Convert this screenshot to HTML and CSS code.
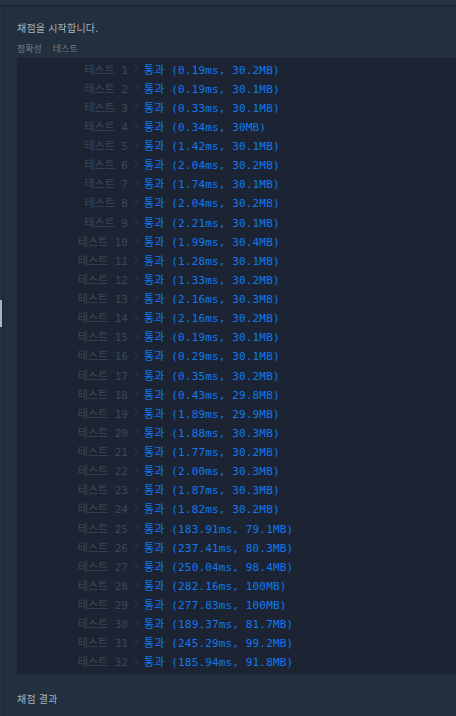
FILE: index.html
```html
<!DOCTYPE html>
<html lang="ko">
<head>
<meta charset="utf-8">
<link rel="stylesheet" href="styles.css">
</head>
<body>
<div class="topbar"></div>
<div class="page">
  <div class="rail"><div class="thumb"></div></div>
  <div class="main">
    <div class="title">채점을 시작합니다.</div>
    <div class="tabs"><span>정확성</span><span>테스트</span></div>
    <div class="console" id="console"></div>
    <div class="result-title">채점 결과</div>
  </div>
</div>
<script>
var data=[["0.19ms","30.2MB"],["0.19ms","30.1MB"],["0.33ms","30.1MB"],["0.34ms","30MB"],["1.42ms","30.1MB"],["2.04ms","30.2MB"],["1.74ms","30.1MB"],["2.04ms","30.2MB"],["2.21ms","30.1MB"],["1.99ms","30.4MB"],["1.28ms","30.1MB"],["1.33ms","30.2MB"],["2.16ms","30.3MB"],["2.16ms","30.2MB"],["0.19ms","30.1MB"],["0.29ms","30.1MB"],["0.35ms","30.2MB"],["0.43ms","29.8MB"],["1.89ms","29.9MB"],["1.88ms","30.3MB"],["1.77ms","30.2MB"],["2.00ms","30.3MB"],["1.87ms","30.3MB"],["1.82ms","30.2MB"],["183.91ms","79.1MB"],["237.41ms","80.3MB"],["250.04ms","98.4MB"],["282.16ms","100MB"],["277.83ms","100MB"],["189.37ms","81.7MB"],["245.29ms","99.2MB"],["185.94ms","91.8MB"]];
var c=document.getElementById('console');
var html='';
data.forEach(function(d,i){
  html+='<div class="row"><span class="label">테스트 '+(i+1)+'</span><span class="chev"><svg width="5" height="9" viewBox="0 0 5 9"><path d="M0.5 0.5 L4 4.5 L0.5 8.5" fill="none" stroke="#2e3a49" stroke-width="1"/></svg></span><span class="res">통과 ('+d[0]+', '+d[1]+')</span></div>';
});
c.innerHTML=html;
</script>
</body>
</html>
```
FILE: styles.css
```css
html, body {
  margin: 0;
  padding: 0;
  background: #222f3f;
}
body {
  width: 456px;
  height: 716px;
  overflow: hidden;
  font-family: "Noto Sans CJK KR", "Noto Sans", sans-serif;
}
.topbar {
  height: 5px;
  background: #243445;
  border-bottom: 1px solid #182230;
}
.page {
  display: flex;
}
.rail {
  width: 3px;
  border-right: 1px solid #1a2431;
  background: #223141;
  position: relative;
  height: 710px;
}
.thumb {
  position: absolute;
  left: 0;
  top: 294px;
  width: 2px;
  height: 27px;
  background: #a9b3bd;
}
.main {
  flex: 1;
  padding-left: 13px;
}
.title {
  margin-top: 15px;
  font-size: 10px;
  line-height: 14px;
  color: #a9b1bb;
  font-weight: 400;
  letter-spacing: 0.2px;
}
.tabs {
  margin-top: 8px;
  display: flex;
  gap: 11px;
  font-size: 9px;
  line-height: 12px;
  color: #6d7d8d;
}
.console {
  margin-top: 3px;
  background: #1c2433;
  border-top: 1px solid #19212d;
  border-bottom: 1px solid #19212d;
  padding-bottom: 2px;
  font-family: "DejaVu Sans Mono", "Noto Sans CJK KR", monospace;
  font-size: 11px;
}
.row {
  display: flex;
  align-items: center;
  height: 19.13px;
  white-space: pre;
}
.label {
  width: 111px;
  text-align: right;
  color: #3a4757;
}
.chev {
  width: 16px;
  display: flex;
  justify-content: center;
  align-items: center;
}
.chev svg {
  display: block;
}
.res {
  color: #0f78f2;
  letter-spacing: 0.15px;
}
.result-title {
  margin-top: 18px;
  font-size: 10px;
  line-height: 14px;
  color: #a9b1bb;
  font-weight: 400;
  letter-spacing: 0.2px;
}
```
